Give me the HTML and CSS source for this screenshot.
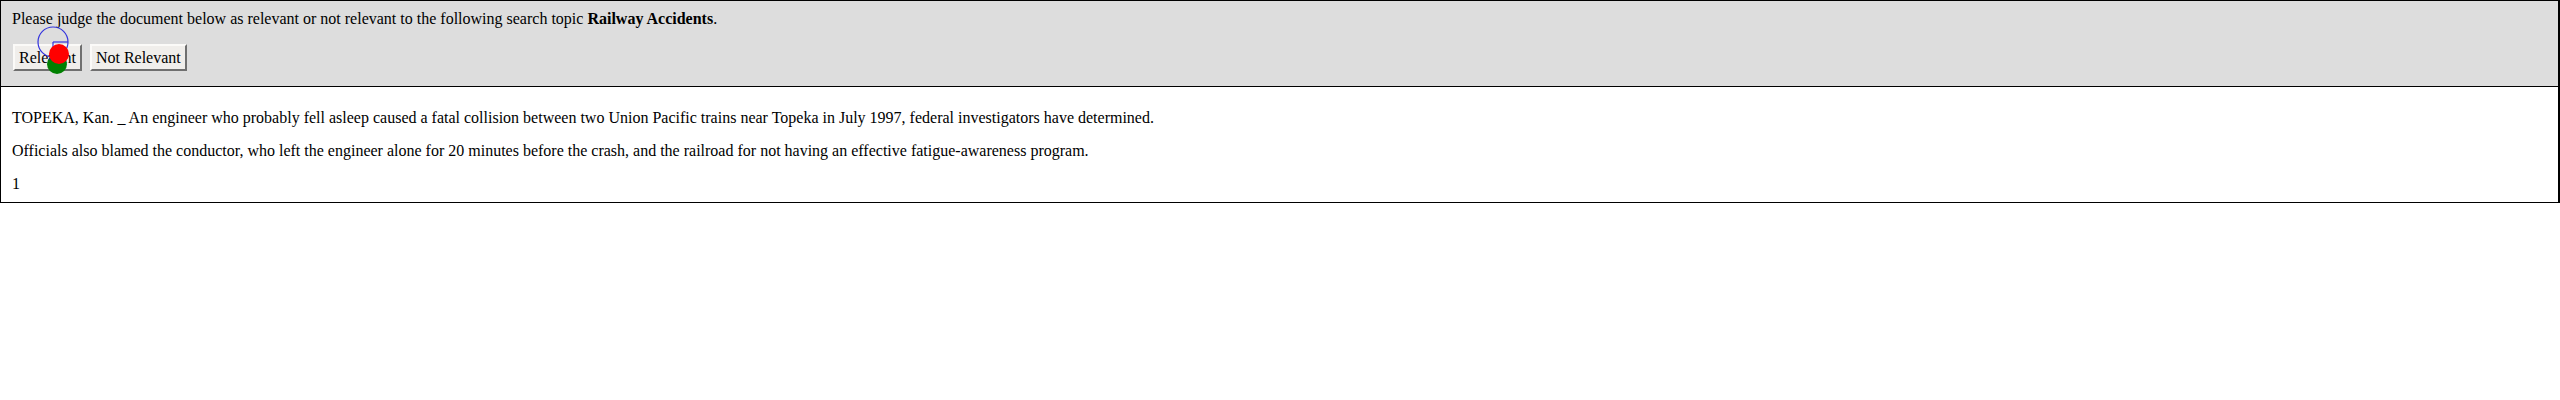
FILE: index.html
```html
<!DOCTYPE html>
<html>
<head>
<meta charset="utf-8">
<link rel="stylesheet" href="styles.css">
</head>
<body>
<div class="frame">
  <div class="header">
    <div class="prompt">Please judge the document below as relevant or not relevant to the following search topic <b>Railway Accidents</b>.</div>
    <div class="actions">
      <button class="btn">Relevant</button>
      <button class="btn">Not Relevant</button>
    </div>
  </div>
  <div class="doc">
    <p>TOPEKA, Kan. _ An engineer who probably fell asleep caused a fatal collision between two Union Pacific trains near Topeka in July 1997, federal investigators have determined.</p>
    <p>Officials also blamed the conductor, who left the engineer alone for 20 minutes before the crash, and the railroad for not having an effective fatigue-awareness program.</p>
    <p>1</p>
  </div>
  <svg class="gaze" width="90" height="90" viewBox="0 0 90 90">
    <circle cx="53" cy="42" r="15" fill="none" stroke="#3333dd" stroke-width="1.2"/>
    <line x1="53" y1="42" x2="68" y2="42" stroke="#3333dd" stroke-width="1.2"/>
    <line x1="53" y1="42" x2="53" y2="56" stroke="#3333dd" stroke-width="1.2"/>
    <circle cx="57" cy="64" r="10" fill="#008000"/>
    <line x1="53" y1="56" x2="49" y2="60" stroke="#22228a" stroke-width="1.5"/>
    <circle cx="59" cy="54" r="10" fill="#ff0000"/>
  </svg>
</div>
</body>
</html>
```

FILE: styles.css
```css
html, body {
  margin: 0;
  padding: 0;
  background: #fff;
}
body {
  font-family: "Liberation Serif", "Times New Roman", serif;
  font-size: 16px;
  line-height: 17px;
  color: #000;
}
.frame {
  position: relative;
  box-sizing: border-box;
  width: 100%;
  border: 1px solid #000;
  border-right-width: 2px;
}
.header {
  background: #dddddd;
  border-bottom: 1px solid #000;
  padding: 9px 10px 13px 10px;
  display: flex;
  flex-direction: column;
  gap: 15px;
}
.prompt {
  padding-left: 1px;
}
.actions {
  display: flex;
  gap: 4px;
}
.btn {
  margin: 2px;
  height: 27px;
  padding: 0 4px;
  font-family: "Liberation Serif", "Times New Roman", serif;
  font-size: 16px;
  color: #000;
  background: #f0eeeb;
  border: 2px solid;
  border-color: #fbfaf8 #6f6f6f #6f6f6f #fbfaf8;
}
.doc {
  padding: 22px 10px 10px 11px;
  display: flex;
  flex-direction: column;
  gap: 16px;
}
.doc p {
  margin: 0;
}
.gaze {
  position: absolute;
  left: -1px;
  top: -1px;
}
```
